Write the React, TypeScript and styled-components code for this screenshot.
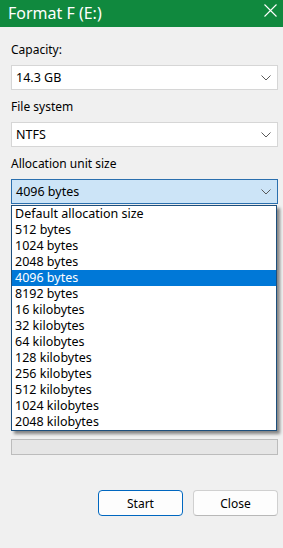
import React from "react";
import styled, { createGlobalStyle } from "styled-components";

const Global = createGlobalStyle`
  html, body { margin: 0; padding: 0; }
  body {
    width: 283px;
    height: 548px;
    overflow: hidden;
    background: #f0f0f0;
    font-family: "Noto Sans", "Open Sans", sans-serif;
    color: #000;
  }
`;

const Window = styled.div`
  width: 283px;
  height: 548px;
  display: flex;
  flex-direction: column;
  background: #f0f0f0;
`;

const TitleBar = styled.div`
  height: 27px;
  background: #10893e;
  color: #fff;
  display: flex;
  align-items: center;
  justify-content: space-between;
  padding: 0 6px 2px 8px;
  box-sizing: border-box;
`;

const Title = styled.div`
  font-size: 16px;
  line-height: 20px;
`;

const CloseX = styled.svg`
  width: 13px;
  height: 13px;
  margin-top: -4px;
`;

const Body = styled.div`
  display: flex;
  flex-direction: column;
  padding: 15px 5px 0 11px;
`;

const Label = styled.div<{ $gap: number }>`
  font-size: 12px;
  line-height: 16px;
  height: 16px;
  margin-top: ${(p) => p.$gap}px;
  margin-bottom: 7px;
`;

const ComboWrap = styled.div`
  position: relative;
`;

const Combo = styled.div<{ $focused?: boolean }>`
  height: 25px;
  box-sizing: border-box;
  border: 1px solid ${(p) => (p.$focused ? "#2a6fae" : "#d6d6d6")};
  background: ${(p) => (p.$focused ? "#cce4f7" : "#fff")};
  display: flex;
  align-items: center;
  justify-content: space-between;
  padding: 0 6px 0 4px;
  font-size: 12.5px;
`;

const Chevron = styled.svg`
  width: 10px;
  height: 6px;
`;

const DropList = styled.div`
  position: absolute;
  left: 0;
  right: 1px;
  top: 26px;
  box-sizing: border-box;
  background: #fff;
  border: 1px solid #1d4f7d;
  box-shadow: 3px 3px 3px rgba(0, 0, 0, 0.45);
  display: flex;
  flex-direction: column;
  padding: 0;
  z-index: 5;
`;

const Item = styled.div<{ $selected?: boolean }>`
  height: 16px;
  line-height: 16px;
  font-size: 12.5px;
  padding-left: 3px;
  background: ${(p) => (p.$selected ? "#0078d7" : "transparent")};
  color: ${(p) => (p.$selected ? "#fff" : "#000")};
  white-space: nowrap;
`;

const Progress = styled.div`
  height: 16px;
  box-sizing: border-box;
  border: 1px solid #bcbcbc;
  background: #e6e6e6;
  margin-top: 235px;
`;

const Buttons = styled.div`
  display: flex;
  justify-content: flex-end;
  gap: 10px;
  margin-top: 35px;
`;

const Button = styled.button<{ $primary?: boolean }>`
  width: 85px;
  height: 26px;
  box-sizing: border-box;
  border-radius: 4px;
  border: 1px solid ${(p) => (p.$primary ? "#0067c0" : "#d0d0d0")};
  border-bottom-color: ${(p) => (p.$primary ? "#0067c0" : "#b8b8b8")};
  background: #fdfdfd;
  font-family: "Noto Sans", "Open Sans", sans-serif;
  font-size: 12px;
  color: #000;
  padding: 0;
`;

const items = [
  "Default allocation size",
  "512 bytes",
  "1024 bytes",
  "2048 bytes",
  "4096 bytes",
  "8192 bytes",
  "16 kilobytes",
  "32 kilobytes",
  "64 kilobytes",
  "128 kilobytes",
  "256 kilobytes",
  "512 kilobytes",
  "1024 kilobytes",
  "2048 kilobytes",
];

const ChevronIcon = () => (
  <Chevron viewBox="0 0 10 6">
    <path d="M0.5 0.5 L5 5 L9.5 0.5" fill="none" stroke="#5a5a5a" strokeWidth="1" />
  </Chevron>
);

export default function App() {
  return (
    <>
      <Global />
      <Window>
        <TitleBar>
          <Title>Format F (E:)</Title>
          <CloseX viewBox="0 0 13 13">
            <path d="M0.5 0.5 L12.5 12.5 M12.5 0.5 L0.5 12.5" stroke="#fff" strokeWidth="1.1" fill="none" />
          </CloseX>
        </TitleBar>
        <Body>
          <Label $gap={0}>Capacity:</Label>
          <Combo>
            <span>14.3 GB</span>
            <ChevronIcon />
          </Combo>
          <Label $gap={9}>File system</Label>
          <Combo>
            <span>NTFS</span>
            <ChevronIcon />
          </Combo>
          <Label $gap={9}>Allocation unit size</Label>
          <ComboWrap>
            <Combo $focused>
              <span>4096 bytes</span>
              <ChevronIcon />
            </Combo>
            <DropList>
              {items.map((t) => (
                <Item key={t} $selected={t === "4096 bytes"}>
                  {t}
                </Item>
              ))}
            </DropList>
          </ComboWrap>
          <Progress />
          <Buttons>
            <Button $primary>Start</Button>
            <Button>Close</Button>
          </Buttons>
        </Body>
      </Window>
    </>
  );
}
